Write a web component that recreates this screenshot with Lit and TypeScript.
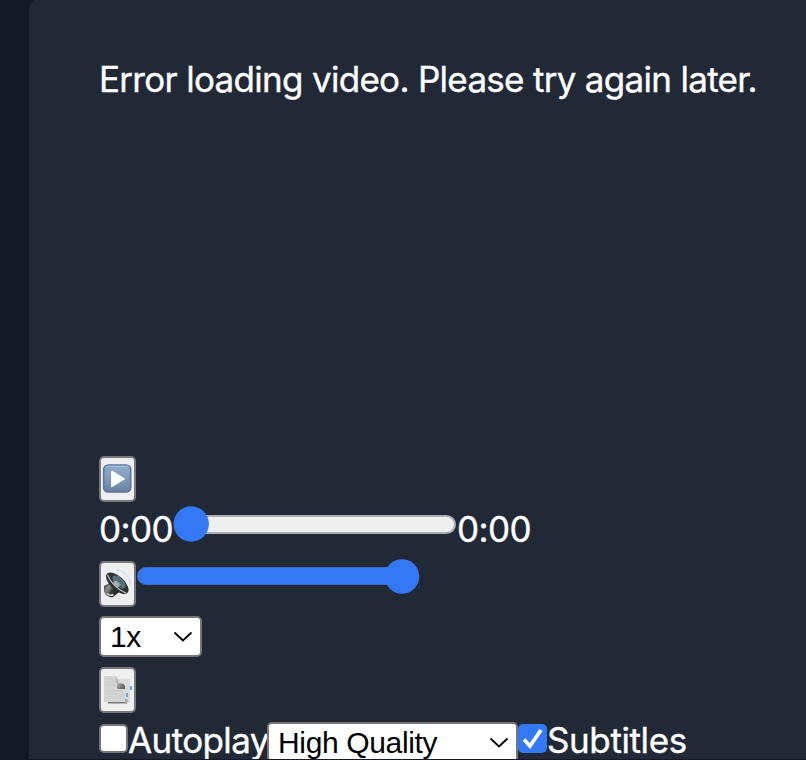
import { LitElement, html, svg, css } from "lit";
import { customElement } from "lit/decorators.js";

const playIcon = svg`
  <defs><linearGradient id="pg" x1="0" y1="0" x2="0" y2="1">
    <stop offset="0" stop-color="#8eaccd"/><stop offset=".55" stop-color="#7f9aba"/><stop offset="1" stop-color="#667f9e"/>
  </linearGradient></defs>
  <rect x="4.700" y="9" width="27" height="27" rx="4.500" fill="url(#pg)" stroke="#5d7693" stroke-width="1.600"/>
  <path d="M7.500 10.300h22" stroke="#a5c1dd" stroke-width="1.200"/>
  <path d="M12 15.300v15.200q.3 1 1.300.5L25.700 23.300q.6-.5 0-1L13.300 14.700q-1-.5-1.300.6z" fill="#fff"/>`;

const speakerIcon = svg`
  <defs><linearGradient id="sg" x1="0" y1="0" x2="1" y2="0.5">
    <stop offset="0" stop-color="#222"/><stop offset=".35" stop-color="#8f8f8f"/><stop offset=".6" stop-color="#3a3a3a"/><stop offset="1" stop-color="#181818"/>
  </linearGradient></defs>
  <path d="M5 25L12 21l11 6-4 5-5 4Q8 37 5 31z" fill="url(#sg)"/>
  <path d="M8 32.500q3 3 6.500 1" stroke="#ddd" stroke-width="1.500" fill="none"/>
  <ellipse cx="18.300" cy="22.300" rx="14" ry="6.800" transform="rotate(43 18.300 22.300)" fill="#2b3033"/>
  <path d="M8.500 14q5 12 19 18.500" stroke="#b9bcbd" stroke-width="1.300" fill="none"/>
  <ellipse cx="20" cy="21" rx="8.500" ry="4" transform="rotate(43 20 21)" fill="#586a70"/>
  <ellipse cx="17.500" cy="23" rx="3.600" ry="2.500" transform="rotate(43 17.500 23)" fill="#a7adaf"/>
  <path d="M15 15l10 12M19 15l7 9" stroke="#539aa8" stroke-width=".9" stroke-dasharray="2 1.500"/>
  <path d="M17 9.500q5-1 10 4 6 6 4 11" stroke="#b8e4ec" stroke-width="1" fill="none"/>`;

const transcriptIcon = svg`
  <defs><linearGradient id="fold" x1="0" y1="0" x2="1" y2="1">
    <stop offset="0" stop-color="#eee"/><stop offset=".5" stop-color="#aaa"/><stop offset="1" stop-color="#505050"/>
  </linearGradient></defs>
  <path d="M14 12h17v24H14z" fill="#dadada"/>
  <path d="M9 34.500h19v2H9z" fill="#777"/>
  <path d="M26 32h2.500v4.500H26z" fill="#aaa"/>
  <path d="M5 9h12l9 12v14H5z" fill="#d4d4d4"/>
  <path d="M7 12h9M7 15h11M7 18h11M7 24h16M7 27h16M7 30h16" stroke="#cacaca" stroke-width=".8"/>
  <path d="M13 8q6 0 6.500 8.500 5-1 6.500 2.500v3h-7.500q-1-2 0-5Q16 14 13 8z" fill="url(#fold)"/>
  <path d="M31 19h2v4h-2zM27 26h2v4h-2z" fill="#5da7fa"/>`;

const chevron = html`<svg class="chev" width="20" height="12" viewBox="0 0 20 12"><path d="M1.500 1.500l8.500 8 8.500-8" fill="none" stroke="#000" stroke-width="1.800"/></svg>`;

@customElement("app-root")
export class AppRoot extends LitElement {
  static styles = css`
    :host { display: block; height: 760px; overflow: hidden; background: #111826; color: #fff;
      font-family: Inter, "Liberation Sans", sans-serif; font-size: 35px; position: relative; }
    .panel { box-sizing: border-box; margin: -6px 0 0 29px; height: 780px; padding: 62px 0 0 70px;
      background: #222936; border-radius: 18px 0 0 0; }
    .video { height: 400px; }
    .text { display: block; white-space: nowrap; line-height: 46px; height: 46px; -webkit-text-stroke: .35px #fff; }
    .message { letter-spacing: -0.7px; }
    .row { display: flex; align-items: flex-start; }
    .play { height: 51px; }
    .time { height: 54px; }
    .clock { width: 74px; margin-top: -1px; letter-spacing: -.6px; }
    .volume { height: 55px; }
    .speed { height: 51px; }
    .script { height: 55px; }
    .btn { box-sizing: border-box; width: 37px; height: 46px; border: 2px solid #77787a; border-radius: 5px;
      background: #efefef; flex: none; }
    .btn svg { display: block; margin: -2px; }
    .slider { display: block; flex: none; overflow: visible; }
    .select { box-sizing: border-box; display: flex; align-items: center; justify-content: space-between;
      border: 2px solid #767676; border-radius: 5px; background: #fff; color: #000; height: 41px; flex: none;
      padding: 0 7px 0 9px; font: 30px/37px "Liberation Sans", Arial, sans-serif; letter-spacing: -.35px; white-space: nowrap; }
    .rate { width: 103px; }
    .quality { width: 251px; }
    .check { box-sizing: border-box; width: 29px; height: 29px; margin-top: 2px; border-radius: 5px; flex: none;
      background: #fff; border: 2px solid #767676; }
    .checked { background: #3478f6; border: 0; }
    .check svg { display: block; }
    .auto { width: 139px; letter-spacing: -.6px; }
    .subs { letter-spacing: -.4px; }
    .options .text { margin-top: -5px; }
    .edge { position: absolute; left: 0; right: 0; bottom: 0; height: 1px; background: #141923; }
  `;

  private button(icon: unknown) {
    return html`<div class="btn"><svg width="37" height="46" viewBox="0 0 37 46">${icon}</svg></div>`;
  }

  render() {
    return html`
      <div class="panel">
        <div class="video"><span class="text message">Error loading video. Please try again later.</span></div>
        <div class="row play">${this.button(playIcon)}</div>
        <div class="row time">
          <span class="text clock">0:00</span>
          <svg class="slider" width="284" height="36" viewBox="0 0 284 36">
            <rect x="2" y="9" width="280" height="17" rx="8.500" fill="#efefef" stroke="#acadae" stroke-width="2"/>
            <circle cx="18.200" cy="17" r="17.700" fill="#3478f6"/>
          </svg>
          <span class="text clock">0:00</span>
        </div>
        <div class="row volume">${this.button(speakerIcon)}
          <svg class="slider" width="284" height="36" viewBox="0 0 284 36">
            <rect x="1.500" y="6.500" width="279" height="17" rx="8.500" fill="#3478f6" stroke="#3e6fc6" stroke-width="1"/>
            <circle cx="266" cy="15.500" r="17.300" fill="#3478f6"/>
          </svg>
        </div>
        <div class="row speed"><div class="select rate"><span>1x</span>${chevron}</div></div>
        <div class="row script">${this.button(transcriptIcon)}</div>
        <div class="row options">
          <span class="check"></span><span class="text auto">Autoplay</span>
          <div class="select quality"><span>High Quality</span>${chevron}</div>
          <span class="check checked"><svg width="29" height="29" viewBox="0 0 29 29"><path d="M6 15.500l6 6.500L23 6" fill="none" stroke="#fff" stroke-width="3.800"/></svg></span>
          <span class="text subs">Subtitles</span>
        </div>
      </div>
      <div class="edge"></div>`;
  }
}
